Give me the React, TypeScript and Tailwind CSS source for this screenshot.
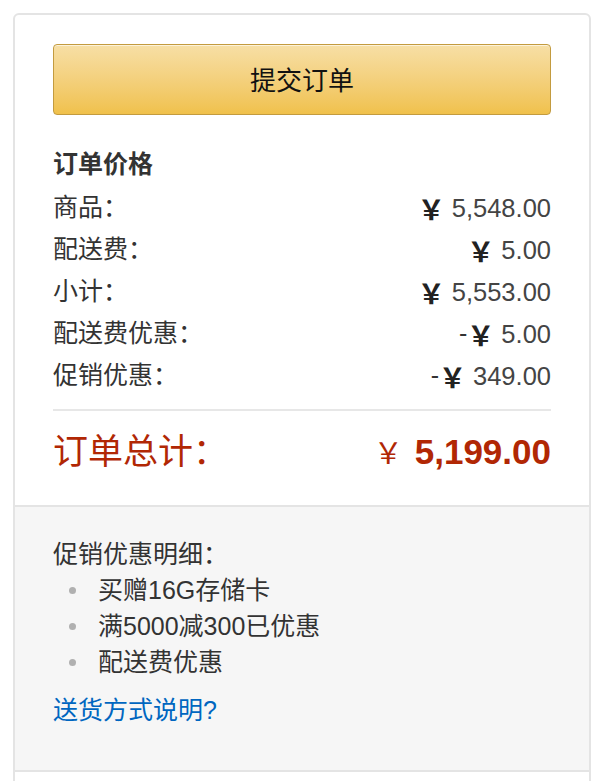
const font = "font-['Liberation_Sans','Noto_Sans_CJK_SC',sans-serif]";

const rows = [
  { label: '商品：', sign: '', amount: '5,548.00' },
  { label: '配送费：', sign: '', amount: '5.00' },
  { label: '小计：', sign: '', amount: '5,553.00' },
  { label: '配送费优惠：', sign: '-', amount: '5.00' },
  { label: '促销优惠：', sign: '-', amount: '349.00' },
];

function Price({ sign, amount }: { sign: string; amount: string }) {
  return (
    <span className="flex items-center">
      {sign && <span className="text-[#333]">{sign}</span>}
      <span className="font-['Noto_Sans_CJK_SC',sans-serif] font-bold text-[27px] leading-none text-[#222]">￥</span>
      <span className="ml-[7px] text-[25.5px] text-[#444]">{amount}</span>
    </span>
  );
}

export default function App() {
  return (
    <div className={`${font} min-h-[781px] bg-white pt-[13px] pl-[13px] overflow-hidden`}>
      <div className="w-[578px] rounded-[6px] border-2 border-[#e4e4e4] bg-white">
        {/* Summary */}
        <div className="px-[38px] pt-[29px] pb-[29px]">
          <button className="flex h-[71px] w-full items-center justify-center rounded-[4px] border border-[#c39b3f] bg-gradient-to-b from-[#f7dfa5] to-[#f0c14b] pt-[3px] text-[26px] text-[#111] shadow-[inset_0_1px_0_rgba(255,255,255,0.6)]">
            提交订单
          </button>

          <h3 className="mt-[28px] text-[25px] leading-[42px] font-bold text-[#333]">订单价格</h3>
          <div className="mt-[2px] text-[25px] text-[#333]">
            {rows.map((r) => (
              <div key={r.label} className="flex h-[42px] items-center justify-between">
                <span>{r.label}</span>
                <Price sign={r.sign} amount={r.amount} />
              </div>
            ))}
          </div>

          <div className="mt-[12px] h-[2px] bg-[#e7e7e7]" />

          <div className="mt-[17px] flex h-[48px] items-center justify-between text-[#b12704]">
            <span className="text-[35px]">订单总计：</span>
            <span className="flex items-center">
              <span className="font-['Noto_Sans_CJK_SC',sans-serif] text-[29px]">￥</span>
              <span className="ml-[12px] text-[35px] font-bold">5,199.00</span>
            </span>
          </div>
        </div>

        {/* Promotions */}
        <div className="border-y-2 border-[#e4e4e4] bg-[#f6f6f6] px-[38px] pt-[29px] pb-[42px] text-[25px] leading-[36px] text-[#333]">
          <p>促销优惠明细：</p>
          <ul>
            {['买赠16G存储卡', '满5000减300已优惠', '配送费优惠'].map((t) => (
              <li key={t} className="flex items-center">
                <span className="ml-[16px] mr-[22px] h-[7px] w-[7px] rounded-full bg-[#b0b0b0]" />
                {t}
              </li>
            ))}
          </ul>
          <a href="#" className="mt-[12px] block text-[#0066c0]">
            送货方式说明?
          </a>
        </div>

        <div className="h-[40px]" />
      </div>
    </div>
  );
}
